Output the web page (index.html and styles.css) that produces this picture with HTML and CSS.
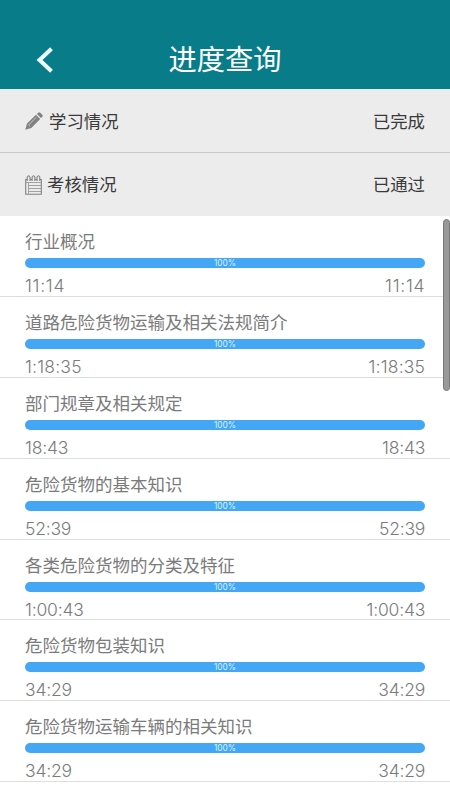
FILE: index.html
```html
<!DOCTYPE html>
<html lang="zh-CN">
<head>
<meta charset="utf-8">
<title>进度查询</title>
<link rel="stylesheet" href="styles.css">
</head>
<body>
<header class="topbar">
  <svg class="back" viewBox="0 0 18 28"><path d="M15.5 2.8 3.5 14 15.5 25.2"/></svg>
  <h1>进度查询</h1>
</header>
<section class="summary">
  <div class="status">
    <svg class="icon pencil" viewBox="0 0 18 18"><path d="M0.3 17.7 2 11.6 11 2.8 15.2 7 6.3 15.9ZM11.9 2 13.2.7Q14.2-.2 15.2.7L17.3 2.8Q18.2 3.8 17.3 4.8L16 6.1Z"/><path class="cut" d="M3.6 13 11.3 5.3M3.6 13 5 14.4"/></svg>
    <span class="name">学习情况</span><span class="value">已完成</span>
  </div>
  <div class="status">
    <svg class="icon pad" viewBox="0 0 17 20"><path d="M.7 4.5H16.3V19.3H.7Z"/><path class="rule" d="M.7 7.5H16.3M3.5 7V19M3.5 10.5H16M3.5 13.5H16M3.5 16.5H16"/><path class="rings" d="M2.2 6V2.2Q3.6-.6 5 2.2V6M7.1 6V2.2Q8.5-.6 9.9 2.2V6M12 6V2.2Q13.4-.6 14.8 2.2V6"/></svg>
    <span class="name">考核情况</span><span class="value">已通过</span>
  </div>
</section>
<main class="courses">
  <article class="course"><h2>行业概况</h2><div class="bar">100%</div><div class="times ones"><span>11:14</span><span>11:14</span></div></article>
  <article class="course"><h2>道路危险货物运输及相关法规简介</h2><div class="bar">100%</div><div class="times long"><span>1:18:35</span><span>1:18:35</span></div></article>
  <article class="course"><h2>部门规章及相关规定</h2><div class="bar">100%</div><div class="times"><span>18:43</span><span>18:43</span></div></article>
  <article class="course"><h2>危险货物的基本知识</h2><div class="bar">100%</div><div class="times"><span>52:39</span><span>52:39</span></div></article>
  <article class="course"><h2>各类危险货物的分类及特征</h2><div class="bar">100%</div><div class="times"><span>1:00:43</span><span>1:00:43</span></div></article>
  <article class="course"><h2>危险货物包装知识</h2><div class="bar">100%</div><div class="times"><span>34:29</span><span>34:29</span></div></article>
  <article class="course"><h2>危险货物运输车辆的相关知识</h2><div class="bar">100%</div><div class="times"><span>34:29</span><span>34:29</span></div></article>
  <article class="course last"><h2>道路危险货物运输管理相关人员的岗位职责</h2></article>
  <div class="scrollbar"></div>
</main>
</body>
</html>
```

FILE: styles.css
```css
* { box-sizing: border-box; }
body {
  margin: 0;
  height: 800px;
  overflow: hidden;
  background: #fff;
  font-family: Inter, "Noto Sans CJK SC", sans-serif;
}
h1, h2 { margin: 0; font-weight: 400; }
.topbar {
  height: 89px;
  padding: 30px 0 0;
  background: #087d89;
  color: #fff;
  display: grid;
  grid-template-columns: 85px 1fr 85px;
}
.back { width: 18px; height: 28px; margin: 16px 0 0 36px; }
.back path { fill: none; stroke: #effffd; stroke-width: 4; }
.topbar h1 { font-size: 28.3px; line-height: 58px; padding-top: 1px; text-align: center; }
.summary { background: #ececec; height: 127px; border-top: 1px solid #d9f0f2; }
.status {
  height: 63px;
  padding: 0 25px;
  display: flex;
  align-items: center;
  font-size: 17.4px;
  line-height: 26px;
  color: #3a3a3a;
}
.status:first-child { border-bottom: 1px solid #c9c9c9; }
.value { margin-left: auto; }
.name, .value { padding-top: 1px; }
.icon { fill: none; stroke: #808080; stroke-width: 1.1; }
.pencil { width: 18px; height: 18px; margin-right: 6px; }
.pencil path { fill: #818181; stroke: none; }
.pencil .cut { fill: none; stroke: #d8d8d8; stroke-width: .8; }
.pad { width: 17px; height: 20px; margin-right: 5px; }
.pad .rule { stroke: #9a9a9a; stroke-width: .9; }
.pad .rings { fill: #ececec; }
.courses { position: relative; height: 584px; overflow: hidden; }
.course {
  height: 80.9px;
  padding: 13px 25px 0;
  border-bottom: 1px solid #dedede;
  color: #7b7b7b;
}
.course h2 { font-size: 17.5px; line-height: 26px; height: 29px; white-space: nowrap; }
.bar {
  height: 10px;
  border-radius: 5px;
  background: #44a7f6;
  color: #d4f4ff;
  font-size: 8.4px;
  line-height: 10px;
  text-align: center;
}
.times {
  display: flex;
  justify-content: space-between;
  padding-top: 6px;
  font-size: 17.5px;
  font-weight: 350;
  line-height: 24px;
  letter-spacing: -.2px;
  font-feature-settings: "calt" 0;
}
.times.ones { letter-spacing: .7px; }
.times.long { letter-spacing: .2px; }
.times span:last-child { margin-right: -.2px; }
.course.last { padding-top: 14px; color: #c4c4c4; }
.scrollbar {
  position: absolute;
  top: 3px;
  right: 0;
  width: 7px;
  height: 172px;
  border-radius: 4px;
  border: 1px solid #777;
  background: #999;
}
```
